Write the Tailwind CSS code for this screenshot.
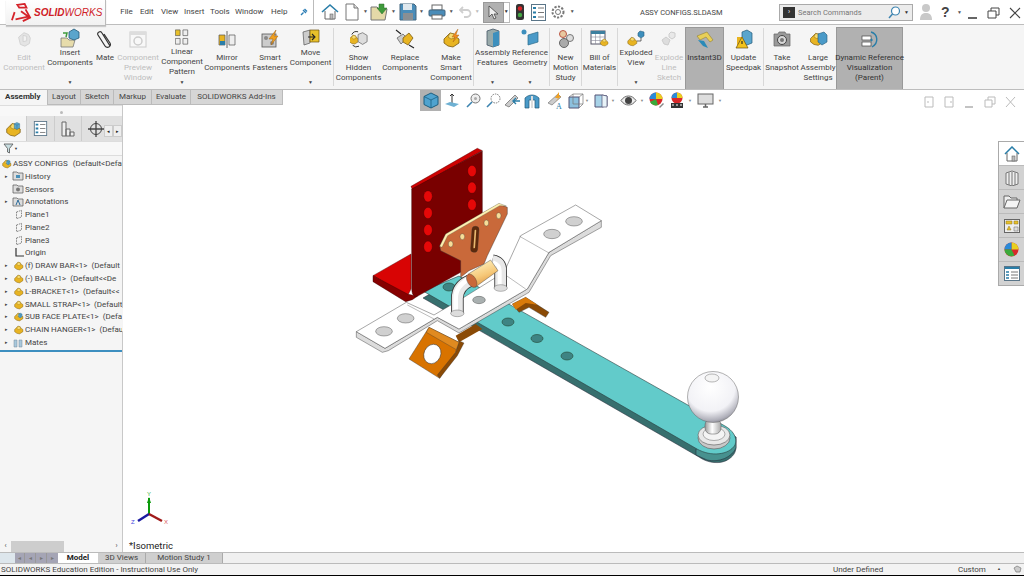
<!DOCTYPE html>
<html lang="en">
<head>
<meta charset="UTF-8">
<title>SOLIDWORKS - ASSY CONFIGS.SLDASM</title>
<script src="https://cdn.jsdelivr.net/npm/@tailwindcss/browser@4"></script>
</head>
<body class="w-[1024px] h-[576px] overflow-hidden bg-white font-['Roboto',sans-serif] text-[#444] text-[8px]">
<svg width="0" height="0" class="absolute">
  <defs>
    <symbol id="part" viewBox="0 0 20 20">
      <path d="M3 10 9 4l4 1 2 3 3 2v4l-6 4-5-1-4-3z" fill="#e8b422" stroke="#7a5a10" stroke-width=".8"/>
      <path d="M9 4l4 1 1 4-4 1-3-2z" fill="#f8dc70" stroke="#7a5a10" stroke-width=".5"/>
    </symbol>
    <symbol id="blue" viewBox="0 0 20 20">
      <path d="M5 5 11 2l6 3v9l-6 4-6-3z" fill="#5aa5cc" stroke="#235a78" stroke-width=".8"/>
      <path d="M5 5l6 3 6-3M11 8v10" fill="none" stroke="#235a78" stroke-width=".7"/>
    </symbol>
    <symbol id="plane" viewBox="0 0 12 12">
      <path d="M3 3 9 1v8l-6 2z" fill="none" stroke="#666" stroke-width=".9" stroke-dasharray="2 1"/>
    </symbol>
  </defs>
</svg>

<div class="flex flex-col w-[1024px] h-[576px]">
  <!-- title bar -->
  <div class="relative flex items-center h-[25px] shrink-0 bg-white border-b border-[#bdbdbd] text-[#444]">
    <div class="absolute left-[6px] top-0 w-[100px] h-[26px] z-10 flex items-center bg-gradient-to-b from-white to-[#f1f1f1] border-r border-b border-[#bbb] shadow-[0_1px_1px_#ccc]">
      <svg width="24" height="20" viewBox="0 0 26 22" class="ml-[3px]"><path d="M9 2 17 1 19 5 11 5ZM13 9l8 6-14 3M6 10l-3 9M18 7l5 9-8 4" fill="none" stroke="#d5232a" stroke-width="2"/></svg>
      <span class="ml-[1px] text-[#cf2027] text-[10px] font-['Liberation_Sans',sans-serif] italic leading-none"><b>SOLID</b>WORKS</span>
    </div>
    <div class="flex items-center ml-[120px] text-[8px]">
      <span class="w-[13px] text-center">File</span>
      <span class="w-[13px] ml-[7px] text-center">Edit</span>
      <span class="w-[15px] ml-[8px] text-center">View</span>
      <span class="w-[18px] ml-[8px] text-center">Insert</span>
      <span class="w-[17px] ml-[8px] text-center">Tools</span>
      <span class="w-[27px] ml-[8px] text-center">Window</span>
      <span class="w-[15px] ml-[9px] text-center">Help</span>
    </div>
    <svg width="8" height="8" viewBox="0 0 8 8" class="ml-[14px]"><path d="M1 7 3.5 4.500M3 2l3 3M4.500 1 7 3.500" stroke="#2b7db5" stroke-width="1.400" fill="none"/></svg>
    <div class="ml-[5px] w-px h-[25px] bg-[#bbb]"></div>
    <!-- quick access -->
    <div class="flex items-center h-full ml-[7px]">
      <svg width="18" height="18" viewBox="0 0 18 18"><path d="M1 9 9 2l8 7" fill="none" stroke="#2a7ea8" stroke-width="1.600"/><path d="M4 8v8h10V8" fill="#fff" stroke="#666"/><rect x="9" y="11" width="3" height="5" fill="#bbb" stroke="#666" stroke-width=".6"/></svg>
      <svg width="16" height="18" viewBox="0 0 16 18" class="ml-[5px]"><path d="M2 1h8l4 4v12H2z" fill="#fff" stroke="#777"/><path d="M10 1v4h4" fill="#ddd" stroke="#777"/></svg>
      <span class="ml-[3px] text-[5px] text-[#555]">▼</span>
      <svg width="20" height="18" viewBox="0 0 20 18" class="ml-[2px]"><path d="M1 4h6l2 2h8l-2 11H1z" fill="#e4d9a8" stroke="#777"/><path d="M9 1h5v4h3l-5 6-5-6h2z" fill="#3f9a3c" stroke="#2c6a2a" stroke-width=".5"/></svg>
      <span class="ml-[1px] text-[5px] text-[#555]">▼</span>
      <svg width="18" height="18" viewBox="0 0 18 18" class="ml-[3px]"><path d="M1 1h14l2 2v14H1z" fill="#4a8cb8" stroke="#44667e"/><rect x="4" y="1" width="9" height="6" fill="#dfe8ee"/><rect x="4" y="10" width="10" height="7" fill="#8a8f93"/></svg>
      <span class="ml-[2px] text-[5px] text-[#555]">▼</span>
      <svg width="18" height="16" viewBox="0 0 18 16" class="ml-[4px]"><rect x="4" y="1" width="10" height="5" fill="#fff" stroke="#666"/><rect x="1" y="6" width="16" height="6" rx="1" fill="#4a8cb8" stroke="#44667e"/><rect x="4" y="11" width="10" height="4" fill="#fff" stroke="#666"/></svg>
      <span class="ml-[3px] text-[5px] text-[#555]">▼</span>
      <svg width="13" height="12" viewBox="0 0 13 12" class="ml-[5px]"><path d="M4 1 1 4l3 3M1 4h7a3.500 3.500 0 0 1 0 7H5" fill="none" stroke="#cfcfcf" stroke-width="1.800"/></svg>
      <span class="ml-[3px] text-[5px] text-[#bbb]">▼</span>
      <div class="ml-[3px] flex items-center justify-center w-[21px] h-[21px] bg-[#b1b1b1] border border-[#999]">
        <svg width="11" height="15" viewBox="0 0 11 15"><path d="M1 1v11l3-3 2 5 2-1-2-4h4z" fill="#eee" stroke="#444" stroke-width=".8"/></svg>
      </div>
      <div class="flex items-center justify-center w-[6px] h-[21px] border-y border-r border-[#bbb] text-[5px] text-[#333]">▼</div>
      <svg width="10" height="18" viewBox="0 0 10 18" class="ml-[5px]"><rect x="1" y="1" width="8" height="16" rx="2.500" fill="#333"/><circle cx="5" cy="5.500" r="2.200" fill="#d8262a"/><circle cx="5" cy="12" r="2.200" fill="#45a845"/></svg>
      <svg width="15" height="17" viewBox="0 0 15 17" class="ml-[6px]"><rect x=".5" y=".5" width="14" height="16" fill="#fff" stroke="#5a7588"/><path d="M2 4h3M2 8.500h3M2 13h3" stroke="#2a7ea8" stroke-width="2"/><path d="M7 4h6M7 8.500h6M7 13h6" stroke="#777"/></svg>
      <svg width="16" height="16" viewBox="0 0 16 16" class="ml-[4px]"><circle cx="8" cy="8" r="5.500" fill="none" stroke="#777" stroke-width="2" stroke-dasharray="2.200 1.400"/><circle cx="8" cy="8" r="2.500" fill="none" stroke="#777"/></svg>
      <span class="ml-[4px] text-[5px] text-[#555]">▼</span>
    </div>
    <span class="absolute left-[640px] top-[7px] text-[7.5px] text-[#444] leading-[11px]">ASSY CONFIGS.SLDASM</span>
    <div class="absolute left-[779px] top-[4px] flex items-center w-[134px] h-[17px] bg-[#ececec] border border-[#aaa]">
      <div class="flex items-center justify-center ml-[3px] w-[12px] h-[11px] bg-[#333] text-white text-[7px] leading-none">›</div>
      <span class="ml-[3px] text-[7.5px] text-[#777]">Search Commands</span>
      <svg width="13" height="13" viewBox="0 0 13 13" class="ml-auto"><circle cx="7.500" cy="5" r="4" fill="#fff" stroke="#3d84b0" stroke-width="1.200"/><path d="M4.500 8 1 12" stroke="#3d84b0" stroke-width="1.500"/></svg>
      <span class="mx-[3px] text-[5px] text-[#333]">▼</span>
    </div>
    <svg width="14" height="18" viewBox="0 0 14 18" class="absolute left-[919px] top-[3px]"><circle cx="7" cy="5" r="4" fill="#c9c9c9"/><path d="M1 17c0-6 3-7 6-7s6 1 6 7z" fill="#c9c9c9"/></svg>
    <span class="absolute left-[941px] top-[2px] text-[14px] font-bold font-['Liberation_Sans',sans-serif] text-[#444] leading-[20px]">?</span>
    <span class="absolute left-[957px] top-[9px] text-[5px] text-[#555]">▼</span>
    <svg width="60" height="12" viewBox="0 0 60 12" class="absolute left-[968px] top-[7px]"><path d="M0 11h9" stroke="#333" stroke-width="1.500"/><path d="M20 4h8v7h-8zM23 4V1h8v7h-3" fill="none" stroke="#444"/><path d="M42 1l10 10M52 1 42 11" stroke="#444" stroke-width="1.100"/></svg>
  </div>

  <!-- ribbon -->
  <div class="flex h-[65px] shrink-0 bg-[#f5f5f5] border-b border-[#bdbdbd] text-center leading-[10px] pl-[2px]">
    <div class="flex flex-col items-center w-[44px] pt-[4px] text-[#bdbdbd]">
      <svg width="18" height="20" viewBox="0 0 20 20"><path d="M4 8l6-5 5 2 2 4-1 6-5 3-5-2z" fill="#e4e4e4" stroke="#d0d0d0"/><path d="M9 6l4 1v5l-4 1z" fill="#f2f2f2" stroke="#d0d0d0"/></svg>
      <span class="mt-[4px]">Edit<br>Component</span>
    </div>
    <div class="flex flex-col items-center w-[48px] pt-[3px] pb-[2px]">
      <svg width="20" height="20" viewBox="0 0 20 20"><path d="M1 10h6l2 2h6l-2 7H1z" fill="#e7dcab" stroke="#777" stroke-width=".8"/><path d="M9 4l5-3 5 3v6l-5 2-5-2z" fill="#5aa5cc" stroke="#235a78" stroke-width=".8"/><path d="M3 5l4 0-1 4" fill="none" stroke="#3f9a3c" stroke-width="1.500"/></svg>
      <span>Insert<br>Components</span>
      <span class="mt-auto text-[5px] text-[#444]">▼</span>
    </div>
    <div class="flex flex-col items-center w-[22px] pt-[4px]">
      <svg width="16" height="20" viewBox="0 0 16 20" fill="none" stroke="#333" stroke-width="1.200"><path d="M13 17 5 4a2 2 0 0 0-4 2l7 11a3 3 0 0 0 5 0 3 3 0 0 0 0-3L7 5"/></svg>
      <span class="mt-[4px]">Mate</span>
    </div>
    <div class="flex flex-col items-center w-[44px] pt-[4px] text-[#bdbdbd]">
      <svg width="18" height="20" viewBox="0 0 18 20"><rect x="1" y="3" width="16" height="15" fill="#f8f8f8" stroke="#ccc"/><path d="M1 3h16v3H1z" fill="#ddd"/><circle cx="9" cy="12" r="4" fill="none" stroke="#ccc" stroke-width="1.500"/></svg>
      <span class="mt-[4px]">Component<br>Preview<br>Window</span>
    </div>
    <div class="flex flex-col items-center w-[44px] pt-[3px] pb-[2px]">
      <svg width="14" height="20" viewBox="0 0 14 20"><path d="M0 2h5v6H0z" fill="#e8c02a" stroke="#555" stroke-width=".7"/><path d="M8 2h5v6H8z" fill="#eee" stroke="#555" stroke-width=".7"/><path d="M0 11h5v6H0z" fill="#eee" stroke="#555" stroke-width=".7"/><path d="M8 11h5v6H8z" fill="#eee" stroke="#555" stroke-width=".7"/></svg>
      <span>Linear<br>Component<br>Pattern</span>
      <span class="mt-auto text-[5px]">▼</span>
    </div>
    <div class="flex flex-col items-center w-[46px] pt-[4px]">
      <svg width="18" height="20" viewBox="0 0 18 20"><path d="M1 6h6v10H1z" fill="#e8b422" stroke="#555" stroke-width=".7"/><path d="M11 6h6v10h-6z" fill="#eee" stroke="#555" stroke-width=".7"/><path d="M9 2v17" stroke="#666"/><path d="M2 12h5v4H2z" fill="#2a7ea8"/></svg>
      <span class="mt-[4px]">Mirror<br>Components</span>
    </div>
    <div class="flex flex-col items-center w-[40px] pt-[4px]">
      <svg width="18" height="20" viewBox="0 0 18 20"><rect x="1" y="5" width="14" height="13" fill="#ccc" stroke="#555" stroke-width=".8"/><circle cx="5" cy="9" r="2" fill="#888"/><circle cx="11" cy="14" r="2" fill="#888"/><path d="M15 1 8 10h4l-2 6 7-9h-4z" fill="#f0a020" stroke="#a06010" stroke-width=".5"/></svg>
      <span class="mt-[4px]">Smart<br>Fasteners</span>
    </div>
    <div class="flex flex-col items-center w-[41px] pt-[3px] pb-[2px]">
      <svg width="18" height="20" viewBox="0 0 18 20"><path d="M1 4 8 2v13l-6 2z" fill="#ccc" stroke="#555" stroke-width=".7"/><path d="M8 2h9v12H8z" fill="#e8c02a" stroke="#6a5010" stroke-width=".7"/><path d="M6 9h6M10 6l3 3-3 3" fill="none" stroke="#222" stroke-width="1.100"/></svg>
      <span>Move<br>Component</span>
      <span class="mt-auto text-[5px]">▼</span>
    </div>
    <div class="my-[3px] mx-[2px] w-px bg-[#d8d8d8]"></div>
    <div class="flex flex-col items-center w-[45px] pt-[4px]">
      <svg width="18" height="20" viewBox="0 0 20 20"><use href="#part" x="-3" y="3" width="14" height="14"/><path d="M9 5l5-2 5 3v7l-5 3-5-3z" fill="#ddd" stroke="#666" stroke-width=".8"/><path d="M2 5a6 6 0 0 1 7-3M3 17a6 6 0 0 0 7 1" fill="none" stroke="#222"/></svg>
      <span class="mt-[4px]">Show<br>Hidden<br>Components</span>
    </div>
    <div class="flex flex-col items-center w-[48px] pt-[4px]">
      <svg width="20" height="20" viewBox="0 0 20 20"><path d="M2 9l6-4 4 4-6 6z" fill="#ccc" stroke="#666" stroke-width=".8"/><path d="M8 9l6-5 4 5-5 7-5-3z" fill="#e8b422" stroke="#7a5a10" stroke-width=".8"/><path d="M1 1l5 4M19 19l-5-3" stroke="#222" stroke-width="1.100"/></svg>
      <span class="mt-[4px]">Replace<br>Components</span>
    </div>
    <div class="flex flex-col items-center w-[44px] pt-[4px]">
      <svg width="20" height="20" viewBox="0 0 20 20"><use href="#part"/><path d="M17 0l-6 8h3l-2 5 6-7h-3z" fill="#f08a20" stroke="#a06010" stroke-width=".4"/></svg>
      <span class="mt-[4px]">Make<br>Smart<br>Component</span>
    </div>
    <div class="my-[3px] w-px bg-[#d8d8d8]"></div>
    <div class="flex flex-col items-center w-[37px] pt-[3px] pb-[2px]">
      <svg width="16" height="20" viewBox="0 0 16 20"><path d="M2 3l6-2 6 2v14l-6 2-6-2z" fill="#9aa" stroke="#456" stroke-width=".8"/><path d="M8 5l6-2v14l-6 2z" fill="#3d8fbd"/></svg>
      <span>Assembly<br>Features</span>
      <span class="mt-auto text-[5px]">▼</span>
    </div>
    <div class="flex flex-col items-center w-[38px] pt-[3px] pb-[2px]">
      <svg width="20" height="20" viewBox="0 0 20 20"><path d="M8 7l10-3v10l-10 3z" fill="#4a9ac8" stroke="#2a6a8a" stroke-width=".7"/><circle cx="4" cy="4" r="2.500" fill="#3d8fbd"/></svg>
      <span>Reference<br>Geometry</span>
      <span class="mt-auto text-[5px]">▼</span>
    </div>
    <div class="my-[3px] w-px bg-[#d8d8d8]"></div>
    <div class="flex flex-col items-center w-[31px] pt-[4px]">
      <svg width="16" height="20" viewBox="0 0 16 20"><circle cx="5" cy="5" r="3.500" fill="#e8c8a0" stroke="#b54" stroke-width="1"/><circle cx="12" cy="9" r="3.500" fill="#ddd" stroke="#777"/><circle cx="6" cy="14" r="4.500" fill="#aaa" stroke="#666"/></svg>
      <span class="mt-[4px]">New<br>Motion<br>Study</span>
    </div>
    <div class="my-[3px] w-px bg-[#d8d8d8]"></div>
    <div class="flex flex-col items-center w-[35px] pt-[4px]">
      <svg width="20" height="20" viewBox="0 0 20 20"><rect x="1" y="2" width="14" height="13" fill="#fff" stroke="#556"/><path d="M1 2h14v3H1z" fill="#3d7f9f"/><path d="M1 8h14M1 11.500h14M5.500 5v10M10 5v10" stroke="#889" stroke-width=".6"/><use href="#part" x="9" y="8" width="10" height="10"/></svg>
      <span class="mt-[4px]">Bill of<br>Materials</span>
    </div>
    <div class="my-[3px] w-px bg-[#d8d8d8]"></div>
    <div class="flex flex-col items-center w-[36px] pt-[3px] pb-[2px]">
      <svg width="20" height="20" viewBox="0 0 20 20"><use href="#part" x="0" y="7" width="12" height="12"/><path d="M14 3l4 1v4l-3 2-3-2V5z" fill="#3d8fbd" stroke="#2a5f80" stroke-width=".6"/><path d="M15 10v3h-4" stroke="#333" fill="none" stroke-width=".7"/></svg>
      <span>Exploded<br>View</span>
      <span class="mt-auto text-[5px]">▼</span>
    </div>
    <div class="flex flex-col items-center w-[30px] pt-[4px] text-[#bdbdbd]">
      <svg width="18" height="20" viewBox="0 0 18 20"><path d="M2 11l4-3 4 3-2 5-4-1z" fill="#ddd" stroke="#ccc"/><path d="M11 3l4 1v4l-3 2-3-2V5z" fill="#e8e8e8" stroke="#ccc"/></svg>
      <span class="mt-[4px]">Explode<br>Line<br>Sketch</span>
    </div>
    <div class="ml-[1px] flex flex-col items-center w-[39px] pt-[3px] bg-[#b1b1b1] border-x border-t border-[#999] mt-[2px] text-[#333]">
      <svg width="18" height="18" viewBox="0 0 18 18"><path d="M1 5 11 1l6 8-3 2-4-5-6 3z" fill="#e8cf58" stroke="#8a7520" stroke-width=".5"/><path d="M2 9l6 1 4 7-5-2z" fill="#2a8ab8"/></svg>
      <span class="mt-[4px]">Instant3D</span>
    </div>
    <div class="flex flex-col items-center w-[39px] pt-[4px]">
      <svg width="18" height="20" viewBox="0 0 18 20"><path d="M7 3l5-2 5 3v10l-5 2-5-2z" fill="#5aa5cc" stroke="#235a78" stroke-width=".7"/><path d="M2 8h6v8H2z" fill="#e8b422"/><path d="M7 8l6 11H1z" fill="#f2c21c" stroke="#6a5010" stroke-width=".7"/><path d="M7 12v3" stroke="#222" stroke-width="1.100"/></svg>
      <span class="mt-[4px]">Update<br>Speedpak</span>
    </div>
    <div class="my-[3px] w-px bg-[#d8d8d8]"></div>
    <div class="flex flex-col items-center w-[36px] pt-[4px]">
      <svg width="18" height="20" viewBox="0 0 18 20"><path d="M1 5h4l1-2h6l1 2h4v12H1z" fill="#999" stroke="#666" stroke-width=".7"/><circle cx="9" cy="11" r="4.500" fill="#d8d8d8" stroke="#444"/><circle cx="9" cy="11" r="2" fill="#777"/></svg>
      <span class="mt-[4px]">Take<br>Snapshot</span>
    </div>
    <div class="flex flex-col items-center w-[36px] pt-[4px]">
      <svg width="20" height="20" viewBox="0 0 20 20"><use href="#part" width="17" height="19"/><path d="M10 5l6-2 3 3v7l-5 3-4-3z" fill="#4a9ac8" stroke="#235a78" stroke-width=".6"/></svg>
      <span class="mt-[4px]">Large<br>Assembly<br>Settings</span>
    </div>
    <div class="flex flex-col items-center w-[67px] pt-[3px] bg-[#b1b1b1] border-x border-t border-[#999] mt-[2px] text-[#333]">
      <svg width="18" height="18" viewBox="0 0 18 18"><rect x="1" y="5" width="9" height="4" fill="#fff" stroke="#444" stroke-width=".7"/><rect x="1" y="11" width="9" height="4" fill="#fff" stroke="#444" stroke-width=".7"/><path d="M10 1c7 2 8 11 1 15" fill="none" stroke="#2a7ea8" stroke-width="1.400"/><path d="M12 9h-3M10.500 7.500v3" stroke="#2a7ea8"/></svg>
      <span class="mt-[4px] whitespace-nowrap">Dynamic Reference<br>Visualization<br>(Parent)</span>
    </div>
  </div>

  <!-- command manager tabs -->
  <div class="flex h-[15px] shrink-0 text-[8px] leading-[14px] text-[#444]">
    <div class="w-[47px] bg-[#f5f5f5] pl-[5px] font-bold text-[#333]">Assembly</div>
    <div class="w-[34px] bg-[#d6d6d6] border-x border-b border-[#bbb] text-center">Layout</div>
    <div class="w-[33px] bg-[#d6d6d6] border-r border-b border-[#bbb] text-center">Sketch</div>
    <div class="w-[38px] bg-[#d6d6d6] border-r border-b border-[#bbb] text-center">Markup</div>
    <div class="w-[39px] bg-[#d6d6d6] border-r border-b border-[#bbb] text-center">Evaluate</div>
    <div class="w-[92px] bg-[#d6d6d6] border-r border-b border-[#bbb] text-center">SOLIDWORKS Add-Ins</div>
  </div>

  <!-- main area -->
  <div class="flex flex-1 min-h-0">
    <!-- feature manager -->
    <div class="relative flex flex-col w-[123px] shrink-0 bg-[#f5f5f5] border-r border-[#c8c8c8] overflow-visible">
      <div class="flex items-center justify-center h-[11px] shrink-0 bg-[#f8f8f8] border-t border-[#ddd]"><span class="mt-[3px] w-[3px] h-[3px] rounded-full bg-[#bbb]"></span></div>
      <div class="flex h-[25px] shrink-0 overflow-hidden">
        <div class="flex items-center justify-center w-[27px] bg-[#f5f5f5] border-r border-[#ccc]"><svg width="18" height="18"><use href="#part" width="18" height="18"/><use href="#blue" x="8" y="1" width="9" height="10"/></svg></div>
        <div class="flex items-center justify-center w-[28px] bg-[#e0e0e0] border-r border-[#ccc]"><svg width="15" height="15" viewBox="0 0 15 17"><rect x=".5" y=".5" width="14" height="16" fill="#fff" stroke="#5a7588"/><path d="M2 4h3M2 8.500h3M2 13h3" stroke="#2a7ea8" stroke-width="2"/><path d="M7 4h6M7 8.500h6M7 13h6" stroke="#777"/></svg></div>
        <div class="flex items-center justify-center w-[27px] bg-[#e0e0e0] border-r border-[#ccc]"><svg width="14" height="16" viewBox="0 0 14 16" fill="#eee" stroke="#666"><path d="M1 1h4v14H1zM5 8h4v7H5zM9 11h4v4H9z"/></svg></div>
        <div class="relative flex-1 bg-[#e0e0e0]">
          <svg width="16" height="16" viewBox="0 0 16 16" class="absolute left-[6px] top-[5px]" fill="none" stroke="#444"><circle cx="8" cy="8" r="5.500"/><path d="M0 8h16M8 0v16" stroke-width="1.300"/></svg>
          <div class="absolute right-[0px] top-[9px] flex text-[5px] text-[#222]">
            <span class="w-[9px] h-[12px] bg-[#eee] border border-[#ccc] text-center leading-[10px]">◂</span>
            <span class="w-[9px] h-[12px] bg-[#eee] border border-[#ccc] text-center leading-[10px]">▸</span>
          </div>
        </div>
      </div>
      <div class="flex items-center h-[15px] shrink-0 border-y border-[#ddd] bg-[#f8f8f8]">
        <svg width="11" height="11" viewBox="0 0 11 11" class="ml-[3px]"><path d="M1 1h9L6.500 5.500V10L4.500 9V5.500z" fill="#c8dde0" stroke="#555" stroke-width=".8"/></svg>
        <span class="text-[4px] text-[#333]">▼</span>
      </div>
      <!-- tree -->
      <div class="flex flex-col pt-[1px] w-[122px] overflow-hidden whitespace-nowrap leading-[13px] text-[8px] text-[#444]">
        <div class="flex items-center h-[12.8px]"><svg width="11" height="11" class="ml-[1px] mr-[1px] shrink-0"><use href="#part" width="11" height="11"/><use href="#blue" x="4" y="1" width="6" height="7"/></svg><span class="shrink-0 mr-[5px]">ASSY CONFIGS</span><span class="shrink-0">(Default&lt;Defa</span></div>
        <div class="flex items-center h-[12.8px]"><span class="shrink-0 w-[12px] text-center text-[5px]">▸</span><svg width="12" height="10" viewBox="0 0 12 10" class="shrink-0"><path d="M1 1h4l1 1h5v7H1z" fill="#ddd" stroke="#555" stroke-width=".7"/><path d="M4 4h4v3H4z" fill="#4a90b8"/></svg><span class="ml-[1px]">History</span></div>
        <div class="flex items-center h-[12.8px] pl-[12px]"><svg width="12" height="10" viewBox="0 0 12 10" class="shrink-0"><path d="M1 1h4l1 1h5v7H1z" fill="#ddd" stroke="#555" stroke-width=".7"/><circle cx="6" cy="5.500" r="2" fill="#777"/></svg><span class="ml-[1px]">Sensors</span></div>
        <div class="flex items-center h-[12.8px]"><span class="shrink-0 w-[12px] text-center text-[5px]">▸</span><svg width="12" height="10" viewBox="0 0 12 10" class="shrink-0"><path d="M1 1h4l1 1h5v7H1z" fill="#ddd" stroke="#555" stroke-width=".7"/><path d="M4 8l2-5 2 5" fill="none" stroke="#2a6a9a"/></svg><span class="ml-[1px]">Annotations</span></div>
        <div class="flex items-center h-[12.8px] pl-[14px]"><svg width="10" height="11" class="shrink-0"><use href="#plane" width="10" height="11"/></svg><span class="ml-[1px]">Plane1</span></div>
        <div class="flex items-center h-[12.8px] pl-[14px]"><svg width="10" height="11" class="shrink-0"><use href="#plane" width="10" height="11"/></svg><span class="ml-[1px]">Plane2</span></div>
        <div class="flex items-center h-[12.8px] pl-[14px]"><svg width="10" height="11" class="shrink-0"><use href="#plane" width="10" height="11"/></svg><span class="ml-[1px]">Plane3</span></div>
        <div class="flex items-center h-[12.8px] pl-[14px]"><svg width="10" height="10" viewBox="0 0 10 10" class="shrink-0"><path d="M2 0v8h8" fill="none" stroke="#333" stroke-width="1.200"/></svg><span class="ml-[1px]">Origin</span></div>
        <div class="flex items-center h-[12.8px]"><span class="shrink-0 w-[13px] text-center text-[5px]">▸</span><svg width="11" height="11" class="shrink-0"><use href="#part" width="11" height="11"/></svg><span class="shrink-0 ml-[1px] mr-[4px]">(f) DRAW BAR&lt;1&gt;</span><span class="shrink-0">(Default</span></div>
        <div class="flex items-center h-[12.8px]"><span class="shrink-0 w-[13px] text-center text-[5px]">▸</span><svg width="11" height="11" class="shrink-0"><use href="#part" width="11" height="11"/></svg><span class="shrink-0 ml-[1px] mr-[4px]">(-) BALL&lt;1&gt;</span><span class="shrink-0">(Default&lt;&lt;De</span></div>
        <div class="flex items-center h-[12.8px]"><span class="shrink-0 w-[13px] text-center text-[5px]">▸</span><svg width="11" height="11" class="shrink-0"><use href="#part" width="11" height="11"/></svg><span class="shrink-0 ml-[1px] mr-[4px]">L-BRACKET&lt;1&gt;</span><span class="shrink-0">(Default&lt;&lt;</span></div>
        <div class="flex items-center h-[12.8px]"><span class="shrink-0 w-[13px] text-center text-[5px]">▸</span><svg width="11" height="11" class="shrink-0"><use href="#part" width="11" height="11"/></svg><span class="shrink-0 ml-[1px] mr-[4px]">SMALL STRAP&lt;1&gt;</span><span class="shrink-0">(Default</span></div>
        <div class="flex items-center h-[12.8px]"><span class="shrink-0 w-[13px] text-center text-[5px]">▸</span><svg width="11" height="11" class="shrink-0"><use href="#part" width="11" height="11"/><use href="#blue" x="4" y="1" width="6" height="7"/></svg><span class="shrink-0 ml-[1px] mr-[4px]">SUB FACE PLATE&lt;1&gt;</span><span class="shrink-0">(Defa</span></div>
        <div class="flex items-center h-[12.8px]"><span class="shrink-0 w-[13px] text-center text-[5px]">▸</span><svg width="11" height="11" class="shrink-0"><use href="#part" width="11" height="11"/></svg><span class="shrink-0 ml-[1px] mr-[4px]">CHAIN HANGER&lt;1&gt;</span><span class="shrink-0">(Defau</span></div>
        <div class="flex items-center h-[12.8px]"><span class="shrink-0 w-[13px] text-center text-[5px]">▸</span><svg width="11" height="10" viewBox="0 0 11 10" class="shrink-0"><path d="M1 2h3v7H1zM6 2h3v7H6z" fill="#a8c8dc" stroke="#789" stroke-width=".5"/></svg><span class="ml-[1px]">Mates</span></div>
        <div class="mt-[1px] h-[2px] bg-[#3d8fc0]"></div>
      </div>
      <div class="absolute left-[122px] top-[202px] flex items-center justify-center w-[7px] h-[25px] bg-[#f5f5f5] border border-l-0 border-[#ccc]"><span class="w-[2px] h-[2px] rounded-full bg-[#999]"></span></div>
      <!-- horizontal scrollbar -->
      <div class="mt-auto flex items-center h-[11px] shrink-0 text-[7px] text-[#444]">
        <span class="w-[11px] text-center">‹</span>
        <div class="w-[53px] h-[11px] bg-[#cdcdcd]"></div>
        <span class="ml-auto w-[11px] text-center">›</span>
      </div>
    </div>

    <!-- graphics area -->
    <div class="relative flex-1 bg-white">
      <!-- heads-up toolbar -->
      <div class="absolute left-[297px] top-[-15px] flex items-center h-[21px] z-10">
        <div class="flex items-center justify-center w-[21px] h-[21px] bg-[#b1b1b1]"><svg width="16" height="17" viewBox="0 0 16 17"><path d="M8 1l7 3.500v8L8 16l-7-3.500v-8z" fill="#4fa3cf" stroke="#1d5f80"/><path d="M1 4.500 8 8l7-3.500M8 8v8" fill="none" stroke="#1d5f80" stroke-width=".8"/></svg></div>
        <svg width="16" height="16" viewBox="0 0 16 16" class="ml-[3px]"><path d="M8 1v10M6 3l2-2 2 2" fill="none" stroke="#333"/><path d="M1 11l5-2 9 2-5 3z" fill="#6eb1d3"/></svg>
        <svg width="15" height="15" viewBox="0 0 15 15" class="ml-[6px]"><circle cx="9.500" cy="5.500" r="4.500" fill="#eee" stroke="#777"/><circle cx="9.500" cy="5.500" r="1.500" fill="#aaa"/><path d="M6 9l-5 5" stroke="#3d84b0" stroke-width="1.600"/></svg>
        <svg width="15" height="15" viewBox="0 0 15 15" class="ml-[5px]"><circle cx="9.500" cy="5.500" r="4.500" fill="#fff" stroke="#777" stroke-dasharray="1.500 1"/><path d="M6 9l-5 5" stroke="#3d84b0" stroke-width="1.600"/></svg>
        <svg width="17" height="15" viewBox="0 0 17 15" class="ml-[3px]"><path d="M1 12 11 2l3 3-9 9z" fill="#ccc" stroke="#666" stroke-width=".7"/><path d="M16 8H9M12 5 9 8l3 3" fill="none" stroke="#2a7ea8" stroke-width="1.400"/></svg>
        <svg width="16" height="16" viewBox="0 0 16 16" class="ml-[3px]"><path d="M1 5c4-4 10-4 14 0v10h-4V7H5v8H1z" fill="#4a9ac8" stroke="#235a78" stroke-width=".7"/><path d="M7 3v12h2V3z" fill="#ddd"/></svg>
        <svg width="17" height="18" viewBox="0 0 17 18" class="ml-[7px]"><path d="M1 11 11 2l3 3-9 8z" fill="#ccc" stroke="#666" stroke-width=".6"/><path d="M12 0 8 6h3L9 9l5-5h-2z" fill="#f0a020"/><text x="9" y="17" font-size="8" fill="#2a7ea8" font-family="Liberation Serif, serif">A</text></svg>
        <svg width="16" height="16" viewBox="0 0 16 16" class="ml-[4px]"><path d="M1 4h10v11H1z" fill="#8cc0de" stroke="#557"/><path d="M1 4l4-3h10v10l-4 4M11 4l4-3M5 1v10h10" fill="none" stroke="#777" stroke-width=".7"/></svg>
        <span class="ml-[1px] text-[4px] text-[#888]">▼</span>
        <svg width="14" height="15" viewBox="0 0 14 15" class="ml-[5px]"><path d="M1 2h7l5 1v10l-5 1H1z" fill="#a8d3e8" stroke="#557"/><path d="M8 2v12h5V3z" fill="#e8f3f8" stroke="#557" stroke-width=".7"/></svg>
        <span class="ml-[3px] text-[4px] text-[#888]">▼</span>
        <svg width="17" height="11" viewBox="0 0 17 11" class="ml-[5px]"><path d="M1 5.500c4-6 11-6 15 0-4 6-11 6-15 0z" fill="#eee" stroke="#666"/><circle cx="8.500" cy="5.500" r="3.500" fill="#444"/></svg>
        <span class="ml-[3px] text-[4px] text-[#888]">▼</span>
        <svg width="16" height="17" viewBox="0 0 16 17" class="ml-[4px]"><circle cx="8" cy="7" r="6.500" fill="#d8282a"/><path d="M8 7V.5a6.500 6.500 0 0 1 6.500 6.500z" fill="#e8d020"/><path d="M8 7H1.500a6.500 6.500 0 0 1 6.500-6.500z" fill="#2a8ad8"/><path d="M8 7 2 10a6.500 6.500 0 0 0 8 3z" fill="#3aaa3a"/><path d="M11 15l4-4 1 1-4 4z" fill="#888"/></svg>
        <svg width="16" height="17" viewBox="0 0 16 17" class="ml-[5px]"><circle cx="8" cy="6" r="5.500" fill="#d8282a"/><path d="M8 6V.5a5.500 5.500 0 0 1 5.500 5.500z" fill="#e8d020"/><path d="M8 6H2.500A5.500 5.500 0 0 1 8 .5z" fill="#2a8ad8"/><path d="M2 11h12v5H2z" fill="#333"/><path d="M3 13h2M7 13h2M11 13h2" stroke="#fff"/></svg>
        <span class="ml-[3px] text-[4px] text-[#888]">▼</span>
        <svg width="17" height="15" viewBox="0 0 17 15" class="ml-[5px]"><rect x="1" y="1" width="15" height="10" fill="#ddd" stroke="#666"/><path d="M6 14h5M8.500 11v3" stroke="#666" stroke-width="1.500"/></svg>
        <span class="ml-[4px] text-[4px] text-[#888]">▼</span>
      </div>
      <!-- viewport window buttons -->
      <svg width="100" height="12" viewBox="0 0 100 12" class="absolute left-[801px] top-[-9px] z-10" fill="none" stroke="#bbb"><path d="M1 1h8v10H1zM3 6h2M21 1h8v10h-8zM26 6h2"/><path d="M41 11h8" stroke="#aaa" stroke-width="1.400"/><path d="M61 4h7v7h-7zM64 4V1h7v7h-3M82 1l9 10M91 1l-9 10"/></svg>

      <!-- 3D model -->
      <svg class="absolute inset-0" width="900" height="445" viewBox="124 106 900 445">
        <defs>
          <radialGradient id="ballFill" cx=".45" cy=".3" r=".8"><stop offset="0" stop-color="#fff"/><stop offset=".6" stop-color="#f2f2f6"/><stop offset=".82" stop-color="#b0b0ba"/><stop offset="1" stop-color="#55555f"/></radialGradient>
          <linearGradient id="gold" x1=".3" y1="0" x2=".7" y2="1"><stop offset="0" stop-color="#fff4c4"/><stop offset=".55" stop-color="#f6c878"/><stop offset="1" stop-color="#d88a3a"/></linearGradient>
          <linearGradient id="pipe" x1="0" y1="0" x2="1" y2="0"><stop offset="0" stop-color="#999"/><stop offset=".45" stop-color="#fff"/><stop offset="1" stop-color="#aaa"/></linearGradient>
        </defs>
        <!-- draw bar -->
        <path d="M424 299 700 458C708 464 722 466 730 460 736 456 737 451 737 448V438L460 278Z" fill="#376f6e" stroke="#223" stroke-width=".5"/>
        <path d="M737 438V449C733 458 720 464 708 461L697 456V450Z" fill="#47918f" stroke="#223" stroke-width=".5"/>
        <path d="M424 292 698 450C712 458 730 456 736 446 739 438 733 431 726 427L460 277Z" fill="#62cbca" stroke="#263c3c" stroke-width=".6"/>
        <ellipse cx="450" cy="288" rx="6" ry="4" fill="#3e8483" stroke="#243" stroke-width=".6"/>
        <ellipse cx="509" cy="323" rx="6" ry="4" fill="#3e8483" stroke="#243" stroke-width=".6"/>
        <ellipse cx="538" cy="339.500" rx="6" ry="4" fill="#3e8483" stroke="#243" stroke-width=".6"/>
        <ellipse cx="568" cy="357" rx="6" ry="4" fill="#3e8483" stroke="#243" stroke-width=".6"/>
        <!-- ball -->
        <ellipse cx="715" cy="439" rx="16" ry="11" fill="#c8c8c8" stroke="#555" stroke-width=".6"/>
        <ellipse cx="715" cy="436" rx="16" ry="10" fill="#e8e8e8" stroke="#555" stroke-width=".6"/>
        <ellipse cx="715" cy="435" rx="11" ry="6.500" fill="#f4f4f4" stroke="#666" stroke-width=".5"/>
        <rect x="706" y="420" width="16" height="15" rx="6" fill="url(#pipe)" stroke="#555" stroke-width=".5"/>
        <circle cx="714" cy="398" r="25.500" fill="url(#ballFill)" stroke="#666" stroke-width=".5"/>
        <ellipse cx="713" cy="379" rx="7" ry="4" fill="#f4f4f4" stroke="#888" stroke-width=".6"/>
        <!-- near part of assembly, in coordinates of a 3x crop -->
        <g transform="translate(350 140) scale(.33333)">
          <!-- orange chain hanger -->
          <path d="M490 495 530 475 600 520 590 535 540 505 510 520Z" fill="#8a4a06" stroke="#333" stroke-width="1.200"/>
          <path d="M490 495 530 475 565 497 530 492 500 512Z" fill="#d97a0a"/>
          <path d="M330 610 400 570 380 555 320 590Z" fill="#8a4a06"/>
          <path d="M240 565 330 610 320 640 272 718 180 660Z" fill="#d87300" stroke="#333" stroke-width="1.200"/>
          <path d="M330 605 345 612 325 650 272 718 265 708 320 640Z" fill="#8a4a06" stroke="#333"/>
          <path d="M240 565 330 610 322 632 232 580Z" fill="#e08a20" stroke="#333"/>
          <ellipse cx="250" cy="645" rx="25" ry="30" transform="rotate(25 250 645)" fill="#fff" stroke="#333" stroke-width="1.500"/>
          <!-- red bracket -->
          <path d="M72 410 186 345 186 450 175 472Z" fill="#d80404" stroke="#400" stroke-width="1.200"/>
          <path d="M72 410V428L170 488 190 482 205 472 175 465Z" fill="#860000" stroke="#300" stroke-width="1.200"/>
          <path d="M186 142 385 28 400 35 190 152Z" fill="#cf0303" stroke="#400" stroke-width="1.200"/>
          <path d="M188 150 400 36V290L335 400 205 472C190 475 188 460 188 440Z" fill="#790000" stroke="#300" stroke-width="1.200"/>
          <ellipse cx="237" cy="172" rx="13" ry="17" fill="#e60808" stroke="#300"/>
          <ellipse cx="237" cy="222" rx="13" ry="17" fill="#e60808" stroke="#300"/>
          <ellipse cx="237" cy="273" rx="13" ry="17" fill="#e60808" stroke="#300"/>
          <ellipse cx="237" cy="323" rx="13" ry="17" fill="#e60808" stroke="#300"/>
          <ellipse cx="369" cy="96" rx="13" ry="17" fill="#e60808" stroke="#300"/>
          <ellipse cx="369" cy="146" rx="13" ry="17" fill="#e60808" stroke="#300"/>
          <ellipse cx="369" cy="197" rx="13" ry="17" fill="#e60808" stroke="#300"/>
          <!-- white strap -->
          <path d="M22 578V595L100 640 118 635 265 545 330 582 540 460 605 350 757 265V245L600 340 535 450 330 570 265 535 108 628Z" fill="#dcdcdc" stroke="#333" stroke-width="1.300"/>
          <path d="M22 578 172 490 255 528 345 475 465 400 515 290 680 198 757 245 600 340 535 450 330 570 265 535 108 628Z" fill="#fff" stroke="#333" stroke-width="1.300"/>
          <path d="M512 292 600 342M175 498 255 540M465 405 530 450" fill="none" stroke="#333" stroke-width="1"/>
          <ellipse cx="105" cy="577" rx="25" ry="14" fill="#d0d0d0" stroke="#333" stroke-width="1.200"/>
          <ellipse cx="170" cy="538" rx="25" ry="14" fill="#d0d0d0" stroke="#333" stroke-width="1.200"/>
          <ellipse cx="609" cy="285" rx="25" ry="14" fill="#d0d0d0" stroke="#333" stroke-width="1.200"/>
          <ellipse cx="675" cy="247" rx="25" ry="14" fill="#d0d0d0" stroke="#333" stroke-width="1.200"/>
          <ellipse cx="390" cy="483" rx="19" ry="11" fill="#a9b0b0" stroke="#333" stroke-width="1.200"/>
          <!-- copper plate -->
          <path d="M275 335 272 320 290 285 450 195 475 205 475 225 415 350 405 375 360 395 335 415 335 365Z" fill="#c9693a" stroke="#333" stroke-width="1.200"/>
          <path d="M272 322 290 285 450 193 472 201 452 200 296 290 279 325Z" fill="#fff0b0" stroke="#333" stroke-width=".8"/>
          <ellipse cx="305" cy="315" rx="7" ry="9" fill="#f7dd98" stroke="#333"/>
          <ellipse cx="340" cy="293" rx="7" ry="9" fill="#f7dd98" stroke="#333"/>
          <ellipse cx="412" cy="252" rx="7" ry="9" fill="#f7dd98" stroke="#333"/>
          <ellipse cx="449" cy="230" rx="7" ry="9" fill="#f7dd98" stroke="#333"/>
          <rect x="367" y="262" width="21" height="78" rx="10" transform="rotate(4 378 300)" fill="#5e2a0c" stroke="#333"/>
          <rect x="375" y="272" width="5" height="56" rx="2.500" transform="rotate(4 378 300)" fill="#e8b870"/>
          <!-- tubes -->
          <path d="M325 525V478C325 450 340 435 362 425" fill="none" stroke="#333" stroke-width="38"/>
          <path d="M325 525V478C325 450 340 435 362 425" fill="none" stroke="#e8e8e8" stroke-width="33"/>
          <path d="M320 525V478C320 450 335 435 358 420" fill="none" stroke="#fff" stroke-width="14"/>
          <path d="M455 448V395C455 375 445 368 430 365" fill="none" stroke="#333" stroke-width="38"/>
          <path d="M455 448V395C455 375 445 368 430 365" fill="none" stroke="#e8e8e8" stroke-width="33"/>
          <path d="M452 448V395C452 380 445 375 432 370" fill="none" stroke="#fff" stroke-width="12"/>
          <ellipse cx="325" cy="523" rx="20" ry="10" fill="#ddd" stroke="#333"/>
          <ellipse cx="455" cy="447" rx="20" ry="10" fill="#ddd" stroke="#333"/>
          <!-- bushing -->
          <path d="M358 405 425 363 447 395 378 445Z" fill="url(#gold)" stroke="#333" stroke-width="1.200"/>
          <ellipse cx="368" cy="425" rx="13" ry="22" transform="rotate(-30 368 425)" fill="#c9693a" stroke="#333"/>
        </g>
        <!-- triad -->
        <path d="M150 515V499" stroke="#0a9a0a" stroke-width="2"/><path d="M150 498l-2 6h4z" fill="#0a9a0a"/>
        <path d="M150 515 139 522" stroke="#1a1aa0" stroke-width="2.500"/><path d="M150 515 163 522" stroke="#a01a1a" stroke-width="2.500"/>
        <text x="148" y="497" font-size="6" fill="#3ab03a" font-family="Liberation Sans, sans-serif">Y</text>
        <text x="132" y="525" font-size="6" fill="#4a4ae0" font-family="Liberation Sans, sans-serif">Z</text>
        <text x="165" y="525" font-size="6" fill="#d85a5a" font-family="Liberation Sans, sans-serif">X</text>
      </svg>
      <span class="absolute left-[6px] bottom-[-1px] text-[9.5px] leading-[14px] text-[#222]">*Isometric</span>

      <!-- task pane tabs -->
      <div class="absolute right-0 top-[36px] flex flex-col w-[26px] border-l border-t border-b border-[#aaa]">
        <div class="flex items-center justify-center h-[24px] bg-white border-b border-[#bbb]"><svg width="16" height="16" viewBox="0 0 16 16"><path d="M1 8 8 1l7 7" fill="none" stroke="#2a7ea8" stroke-width="1.500"/><path d="M3 7v8h10V7" fill="#fff" stroke="#666"/><rect x="8" y="10" width="3" height="5" fill="#bbb" stroke="#666" stroke-width=".6"/></svg></div>
        <div class="flex items-center justify-center h-[24px] bg-[#d2d2d2] border-b border-[#bbb]"><svg width="14" height="16" viewBox="0 0 14 16" fill="#eee" stroke="#777"><path d="M1 3l6-2 6 2v11l-6 2-6-2zM4 2.500V15M7 2v14M10 2.500V15"/></svg></div>
        <div class="flex items-center justify-center h-[24px] bg-[#d2d2d2] border-b border-[#bbb]"><svg width="18" height="14" viewBox="0 0 18 14"><path d="M1 13V1h5l2 2h6v2" fill="#eee" stroke="#666"/><path d="M1 13 4 5h13l-3 8z" fill="#f4f4f4" stroke="#666"/></svg></div>
        <div class="flex items-center justify-center h-[24px] bg-[#d2d2d2] border-b border-[#bbb]"><svg width="16" height="14" viewBox="0 0 16 14"><rect x=".5" y=".5" width="15" height="13" fill="#eee" stroke="#666"/><path d="M2 2h6v3H2zM10 2h4v3h-4zM3 11l2-4 2 4z" fill="#e8c02a" stroke="#8a7520" stroke-width=".5"/><path d="M10 8h4v4h-4z" fill="#ddd" stroke="#777" stroke-width=".6"/></svg></div>
        <div class="flex items-center justify-center h-[24px] bg-[#d2d2d2] border-b border-[#bbb]"><svg width="15" height="15" viewBox="0 0 15 15"><circle cx="7.500" cy="7.500" r="7" fill="#d8282a"/><path d="M7.500 7.500V.5A7 7 0 0 1 14.500 7.500z" fill="#e8d020"/><path d="M7.500 7.500H.5A7 7 0 0 1 7.500.5z" fill="#2a8ad8"/><path d="M7.500 7.500H.5a7 7 0 0 0 10 6z" fill="#3aaa3a"/></svg></div>
        <div class="flex items-center justify-center h-[23px] bg-[#d2d2d2]"><svg width="16" height="15" viewBox="0 0 16 15"><rect x=".5" y=".5" width="15" height="14" fill="#fff" stroke="#5a7588"/><path d="M1 1h14v2H1z" fill="#2a7ea8"/><path d="M2 6h3M2 9h3M2 12h3" stroke="#2a7ea8" stroke-width="1.600"/><path d="M7 6h7M7 9h7M7 12h7" stroke="#777"/></svg></div>
      </div>
    </div>
  </div>

  <!-- bottom tabs -->
  <div class="flex h-[12px] shrink-0 bg-[#f0f0f0] border-y border-[#bbb] text-[8px] leading-[10px] text-[#444]">
    <div class="w-[15px] bg-[#dde6ec]"></div>
    <div class="flex w-[43px] bg-[#a5a5b5] text-[6px] text-center text-[#777]"><span class="w-[10px] border-r border-[#999]">◂</span><span class="w-[11px] border-r border-[#999]">◂</span><span class="w-[11px] border-r border-[#999]">▸</span><span class="w-[11px]">▸</span></div>
    <div class="w-[40px] bg-white text-center font-bold text-[#222]">Model</div>
    <div class="w-[48px] bg-[#cfcfcf] border-r border-[#aaa] text-center">3D Views</div>
    <div class="w-[77px] bg-[#cfcfcf] border-r border-[#aaa] text-center">Motion Study 1</div>
  </div>
  <!-- status bar -->
  <div class="relative flex items-center h-[12px] shrink-0 bg-[#f3f3f3] border-b border-black text-[8px] text-[#444] leading-none">
    <span class="ml-[1px]">SOLIDWORKS Education Edition - Instructional Use Only</span>
    <span class="absolute left-[833px] top-[2px]">Under Defined</span>
    <span class="absolute left-[958px] top-[2px]">Custom</span>
    <span class="absolute left-[997px] top-[3px] text-[4px]">▲</span>
    <svg width="9" height="8" viewBox="0 0 9 8" class="absolute left-[1013px] top-[1px]"><path d="M1 3 4 1l4 2-1 4-4 0z" fill="#ccc" stroke="#777" stroke-width=".7"/></svg>
  </div>
</div>
</body>
</html>
